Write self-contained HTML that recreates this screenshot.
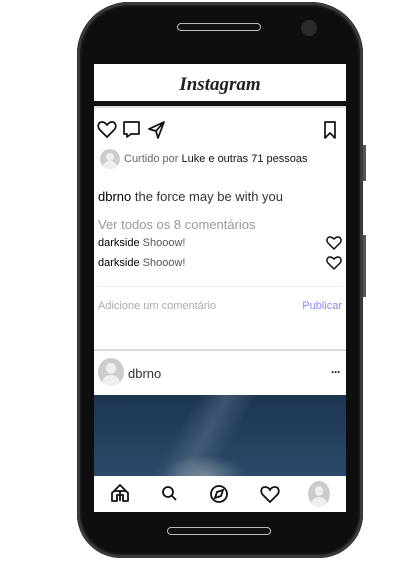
<!DOCTYPE html>
<html><head><style>
body{margin:0;width:420px;height:578px;background:#fff;position:relative;overflow:hidden;font-family:"Liberation Sans",sans-serif}
.phone{position:absolute;left:77px;top:2px;width:286px;height:556px;background:#0e0e0e;border-radius:52px 52px 44px 44px;box-shadow:inset 0 0 0 3px #3a3a3a, inset 0 0 0 5px #1a1a1a}
.btn{position:absolute;background:#555;width:4px;left:362px}
.screen{position:absolute;left:94px;top:64px;width:252px;height:448px;background:#fff;overflow:hidden}
.abs{position:absolute}
.t{position:absolute;white-space:nowrap}
.av{position:absolute;border-radius:50%;background:#ccc;overflow:hidden}
.av::before{content:"";position:absolute;left:30%;top:18%;width:40%;height:40%;border-radius:50%;background:#eee}
.av::after{content:"";position:absolute;left:15%;top:62%;width:70%;height:60%;border-radius:50%;background:#eee}
</style></head><body>
<div class="btn" style="top:145px;height:36px"></div>
<div class="btn" style="top:235px;height:62px"></div>
<div class="phone"></div>
<div class="abs" style="left:177px;top:23px;width:82px;height:6px;border:1.5px solid #bbb;border-radius:4px;background:#111"></div>
<div class="abs" style="left:301px;top:20px;width:16px;height:16px;border-radius:50%;background:#2a2a2a"></div>
<div class="abs" style="left:167px;top:527px;width:102px;height:6px;border:1.5px solid #bbb;border-radius:4px;background:#111"></div>
<div class="screen">
 <div class="t" style="left:0;width:252px;text-align:center;top:10px;font-family:'Liberation Serif',cursive;font-style:italic;font-weight:bold;font-size:19px;color:#222">Instagram</div>
 <div class="abs" style="left:0;top:37px;width:252px;height:5px;background:#111"></div>
 <div class="abs" style="left:0;top:42px;width:252px;height:2px;background:#ddd"></div>
 <svg class="abs" style="left:3px;top:55px" width="250" height="22" fill="none" stroke="#111" stroke-width="1.7">
  <path d="M10 18 L3 11 C0 8 1 3 5 3 C8 3 9 5 10 6 C11 5 12 3 15 3 C19 3 20 8 17 11 Z"/>
  <path d="M27 3 H42 V15 H34 L30 18 V15 H27 Z" stroke-linejoin="round"/>
  <path d="M67 3 L52 10 L59 12 L61 19 Z M59 12 L67 3" stroke-linejoin="round"/>
  <path d="M228 3 H238 V19 L233 14 L228 19 Z" stroke-linejoin="round"/>
 </svg>
 <div class="av" style="left:6px;top:85px;width:20px;height:20px"></div>
 <div class="t" style="left:30px;top:89px;font-size:11px;color:#666">Curtido por <span style="color:#111">Luke e outras 71 pessoas</span></div>
 <div class="t" style="left:4px;top:125px;font-size:13px;color:#333"><span style="color:#000">dbrno</span> the force may be with you</div>
 <div class="t" style="left:4px;top:153px;font-size:13px;color:#999">Ver todos os 8 comentários</div>
 <div class="t" style="left:4px;top:173px;font-size:11px;color:#555"><span style="color:#000">darkside</span> Shooow!</div>
 <div class="t" style="left:4px;top:193px;font-size:11px;color:#555"><span style="color:#000">darkside</span> Shooow!</div>
 <svg class="abs" style="left:232px;top:172px" width="16" height="38" fill="none" stroke="#111" stroke-width="1.5">
  <path d="M8 13 L2 7 C0 5 1 1 4 1 C6 1 7 2 8 3 C9 2 10 1 12 1 C15 1 16 5 14 7 Z"/>
  <path d="M8 33 L2 27 C0 25 1 21 4 21 C6 21 7 22 8 23 C9 22 10 21 12 21 C15 21 16 25 14 27 Z"/>
 </svg>
 <div class="abs" style="left:3px;top:222px;width:246px;height:1px;background:#f0f0f0"></div>
 <div class="t" style="left:4px;top:236px;font-size:11px;color:#aaa">Adicione um comentário</div>
 <div class="t" style="right:4px;top:236px;font-size:11px;color:#8a8aff">Publicar</div>
 <div class="abs" style="left:0;top:285px;width:252px;height:2px;background:#ddd"></div>
 <div class="av" style="left:4px;top:294px;width:26px;height:28px"></div>
 <div class="t" style="left:34px;top:302px;font-size:13px;color:#333">dbrno</div>
 <div class="t" style="right:6px;top:301px;font-size:12px;color:#111;font-weight:bold;letter-spacing:-1px">···</div>
 <div class="abs" style="left:0;top:331px;width:252px;height:81px;background:radial-gradient(ellipse 40px 20px at 110px 80px,rgba(150,160,170,.7),transparent),linear-gradient(120deg,transparent 35%,rgba(120,140,160,.35) 45%,transparent 55%),linear-gradient(180deg,#1c3652,#2b4a6a)"></div>
 <svg class="abs" style="left:0;top:412px" width="252" height="36" fill="none" stroke="#111" stroke-width="1.8">
  <path d="M26 25 V15 L20 15 L26 9 L32 15 L26 15 M26 9 L18 17 V25 H23 V19 H29 V25 H34 V17 Z" stroke-linejoin="round"/>
  <circle cx="74" cy="16" r="5"/><path d="M78 20 L82 24"/>
  <circle cx="125" cy="18" r="8"/><path d="M129 14 L127 20 L121 22 L123 16 Z"/>
  <path d="M176 26 L169 19 C166 16 167 11 171 11 C173 11 175 12 176 14 C177 12 179 11 181 11 C185 11 186 16 183 19 Z"/>
 </svg>
 <div class="av" style="left:214px;top:417px;width:22px;height:26px"></div>
</div>
</body></html>
